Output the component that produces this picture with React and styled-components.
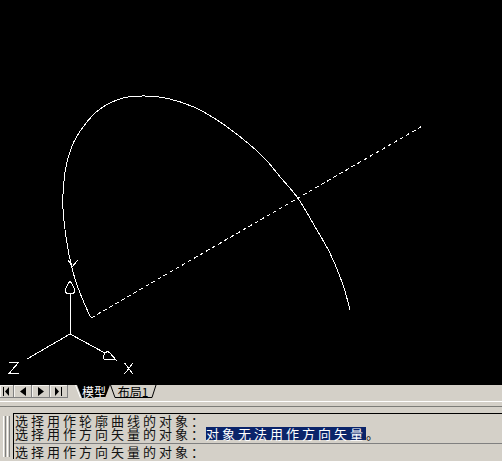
import React from "react";
import styled, { createGlobalStyle } from "styled-components";

const Global = createGlobalStyle`
  html, body { margin: 0; padding: 0; background: #d4d0c8; overflow: hidden; }
  * { box-sizing: border-box; }
`;

const Page = styled.div`
  width: 502px;
  height: 461px;
  display: flex;
  flex-direction: column;
  background: #d4d0c8;
  font-family: "Noto Sans CJK SC", "Liberation Sans", sans-serif;
  overflow: hidden;
`;

const Canvas = styled.svg`
  display: block;
  width: 502px;
  height: 385px;
  flex: none;
  background: #000;
`;

const TabBar = styled.div`
  display: flex;
  height: 13px;
  flex: none;
`;

const NavButton = styled.button`
  width: ${(p) => p.$w}px;
  height: 13px;
  padding: 0;
  display: flex;
  align-items: center;
  justify-content: center;
  background: #d4d0c8;
  border: 0;
  border-right: 1px solid #808080;
  border-bottom: 1px solid #808080;
  box-shadow: inset 1px 1px 0 #f4f2ee;
`;

const Tabs = styled.div`
  display: flex;
  margin-left: 7px;
`;

const Tab = styled.div`
  position: relative;
  width: ${(p) => p.$w}px;
  height: 13px;
  margin-right: ${(p) => p.$overlap || 0}px;
  display: flex;
  align-items: center;
  justify-content: center;
  font-size: 12px;
  line-height: 13px;
  color: ${(p) => (p.$active ? "#fff" : "#000")};
`;

const TabShape = styled.svg`
  position: absolute;
  inset: 0;
  width: 100%;
  height: 100%;
`;

const TabLabel = styled.span`
  position: relative;
  padding-left: ${(p) => p.$pad || 0}px;
`;

const Divider = styled.div`
  flex: none;
  height: 6px;
  margin-top: 3px;
  border-top: 1px solid #fff;
  border-bottom: 1px solid #7c7c78;
`;

const Panel = styled.div`
  flex: none;
  display: flex;
  height: 46px;
  margin-top: 6px;
`;

const Grip = styled.div`
  flex: none;
  width: 13px;
  display: flex;
  gap: 1px;
  padding: 3px 0 2px 3px;
`;

const GripBar = styled.div`
  width: 3px;
  background: #d4d0c8;
  border-left: 1px solid #fff;
  border-right: 1px solid #808080;
`;

const Console = styled.div`
  flex: 1;
  border-top: 1px solid #000;
  border-left: 1px solid #000;
  display: flex;
  flex-direction: column;
  font-size: 13px;
  letter-spacing: 3px;
  color: #111;
  padding-left: 1px;
`;

const History = styled.div`
  height: 30px;
  padding-top: 1px;
  margin-left: -1px;
  padding-left: 1px;
  border-bottom: 1px solid #808080;
`;

const Line = styled.div`
  height: 12px;
  line-height: 12px;
  white-space: nowrap;
`;

const Prompt = styled(Line)`
  margin-top: 2px;
`;

const Selected = styled.span`
  display: inline-block;
  height: 13px;
  line-height: 13px;
  margin-left: -1px;
  background: #0a246a;
  color: #fff;
`;

const FirstIcon = () => (
  <svg width="7" height="9" viewBox="0 0 7 9"><path d="M0 0h1v9H0zM6 0v9L2 4.500z" fill="#000" /></svg>
);
const PrevIcon = () => (
  <svg width="6" height="9" viewBox="0 0 6 9"><path d="M6 0v9L0 4.500z" fill="#000" /></svg>
);
const NextIcon = () => (
  <svg width="6" height="9" viewBox="0 0 6 9"><path d="M0 0v9l6-4.500z" fill="#000" /></svg>
);
const LastIcon = () => (
  <svg width="7" height="9" viewBox="0 0 7 9"><path d="M0 0v9l4-4.500zM6 0h1v9H6z" fill="#000" /></svg>
);

const curve = [
  [90.500, 317.500], [80, 293], [72.500, 270], [66.700, 241.700], [62.800, 205], [65, 172],
  [71.700, 146.700], [83.300, 126.700], [100, 109], [123, 98], [145, 96], [167, 98.300],
  [193, 106.700], [217, 120], [240, 136.700], [263, 156.700], [280, 176.700], [298, 198.300],
  [313, 223.300], [330, 253.300], [343, 285], [350, 310],
];

const spline = (pts) => {
  let d = `M${pts[0][0]} ${pts[0][1]}`;
  for (let i = 0; i < pts.length - 1; i++) {
    const a = pts[Math.max(i - 1, 0)];
    const b = pts[i];
    const c = pts[i + 1];
    const e = pts[Math.min(i + 2, pts.length - 1)];
    const c1 = [b[0] + (c[0] - a[0]) / 6, b[1] + (c[1] - a[1]) / 6];
    const c2 = [c[0] - (e[0] - b[0]) / 6, c[1] - (e[1] - b[1]) / 6];
    d += `C${c1[0].toFixed(1)} ${c1[1].toFixed(1)} ${c2[0].toFixed(1)} ${c2[1].toFixed(1)} ${c[0]} ${c[1]}`;
  }
  return d;
};

export default function App() {
  return (
    <Page>
      <Global />
      <Canvas viewBox="0 0 502 385">
        <g fill="none" stroke="#fff" strokeWidth="1" shapeRendering="crispEdges">
          <path d={spline(curve)} />
          <line x1="91" y1="318" x2="421.500" y2="126.500" strokeDasharray="4 3" />
          <line x1="70.500" y1="334" x2="70.500" y2="294" />
          <path d="M70 281c-3 4-4.500 8-4.500 10 0 2 2 3 4.500 3s4.500-1 4.500-3c0-2-1.500-6-4.500-10z" />
          <line x1="70" y1="334" x2="105" y2="353" />
          <line x1="70" y1="334" x2="27" y2="359" />
          <path d="M116 360l-11.500-.5c-1.500-1.500-1-5 .5-6.500 1.500-1.500 3.500-1.500 5 0z" />
          <path d="M9 362.500h9.500L9 373.500h9.500" />
          <path d="M124.500 363l8.500 11M133 363l-8.500 11" />
          <path d="M68 260l4 6M78 260l-6 7" />
        </g>
      </Canvas>
      <TabBar>
        <NavButton $w={14}><FirstIcon /></NavButton>
        <NavButton $w={18}><PrevIcon /></NavButton>
        <NavButton $w={18}><NextIcon /></NavButton>
        <NavButton $w={18}><LastIcon /></NavButton>
        <Tabs>
          <Tab $w={36} $active $overlap={-2}>
            <TabShape viewBox="0 0 36 13">
              <path d="M2 0H35L30 13H7z" fill="#000" />
              <path d="M.5 0L5.500 13" stroke="#fff" fill="none" />
            </TabShape>
            <TabLabel $pad={2}>模型</TabLabel>
          </Tab>
          <Tab $w={48}>
            <TabShape viewBox="0 0 48 13"><path d="M1.500 0L6 12.500H43L47 0" fill="#d4d0c8" stroke="#000" /></TabShape>
            <TabLabel>布局1</TabLabel>
          </Tab>
        </Tabs>
      </TabBar>
      <Divider />
      <Panel>
        <Grip>
          <GripBar />
          <GripBar />
        </Grip>
        <Console>
          <History>
            <Line>选择用作轮廓曲线的对象：</Line>
            <Line>选择用作方向矢量的对象：<Selected>对象无法用作方向矢量</Selected>。</Line>
          </History>
          <Prompt>选择用作方向矢量的对象：</Prompt>
        </Console>
      </Panel>
    </Page>
  );
}
